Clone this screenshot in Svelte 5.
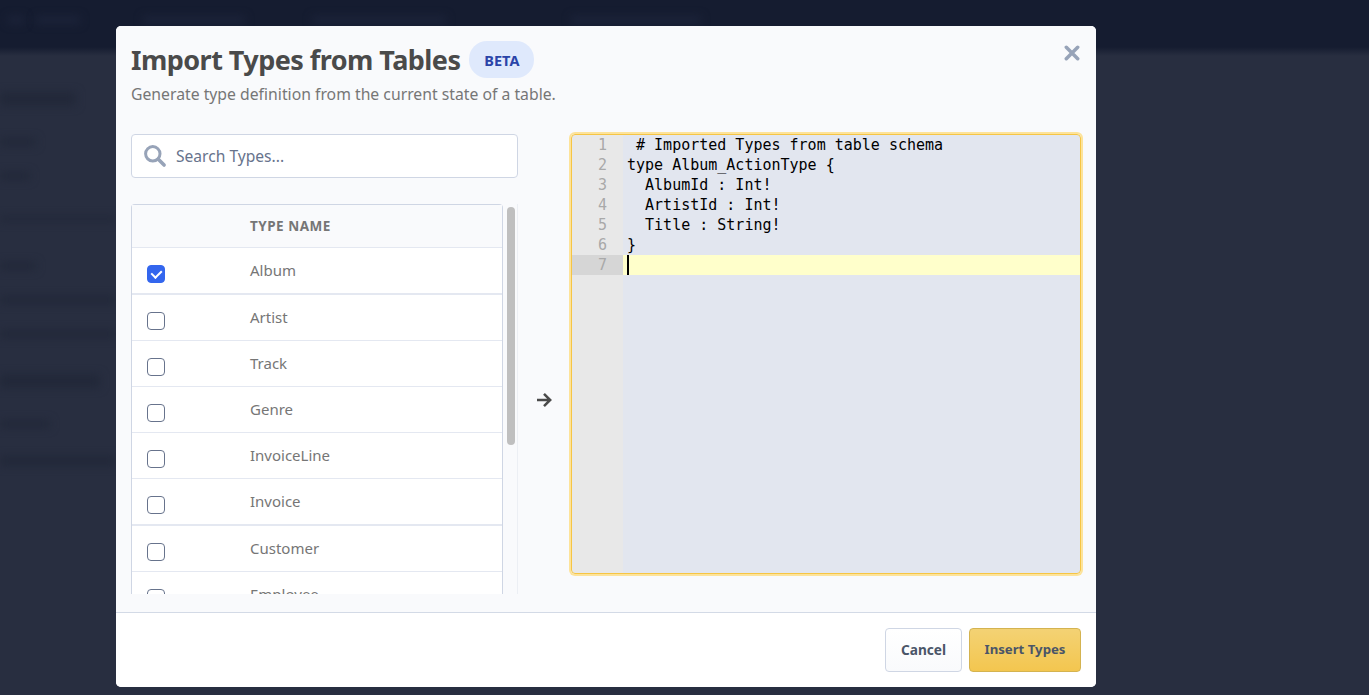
<script>
  let search = $state('');
  let rows = $state([
    { name: 'Album', checked: true, thick: true },
    { name: 'Artist', checked: false },
    { name: 'Track', checked: false },
    { name: 'Genre', checked: false },
    { name: 'InvoiceLine', checked: false },
    { name: 'Invoice', checked: false, thick: true },
    { name: 'Customer', checked: false },
    { name: 'Employee', checked: false }
  ]);

  const code = [
    ' # Imported Types from table schema',
    'type Album_ActionType {',
    '  AlbumId : Int!',
    '  ArtistId : Int!',
    '  Title : String!',
    '}',
    ''
  ];

  // what can still be made out of the page behind the modal
  const navBlurs = [
    { x: 8, w: 16 },
    { x: 12, w: 44 },
    { x: 63, w: 102 },
    { x: 67, w: 134 },
    { x: 125, w: 130 }
  ];
  const pageBlurs = [
    { gap: 92, w: 76, h: 14 },
    { gap: 32, w: 36, h: 8 },
    { gap: 26, w: 30, h: 8 },
    { gap: 36, w: 116, h: 6 },
    { gap: 40, w: 36, h: 8 },
    { gap: 26, w: 116, h: 8 },
    { gap: 26, w: 116, h: 8 },
    { gap: 36, w: 100, h: 14 },
    { gap: 32, w: 50, h: 8 },
    { gap: 28, w: 116, h: 10 }
  ];
</script>

<div class="page">
  <!-- blurred page behind the modal -->
  <div class="backdrop">
    <div class="nav">
      {#each navBlurs as b}
        <div class="nav-blur" style="margin-left: {b.x}px; width: {b.w}px"></div>
      {/each}
    </div>
    <div class="smudges">
      {#each pageBlurs as b}
        <div class="smudge" style="margin-top: {b.gap}px; width: {b.w}px; height: {b.h}px"></div>
      {/each}
    </div>
  </div>

  <div class="modal">
    <div class="body">
      <header>
        <div class="title-row">
          <h1>Import Types from Tables</h1>
          <span class="beta">BETA</span>
        </div>
        <p>Generate type definition from the current state of a table.</p>
        <button class="close" aria-label="Close">
          <svg viewBox="0 0 16 16" width="16" height="16">
            <path d="M2.300 2.300l11.400 11.400M13.700 2.300l-11.400 11.400" stroke="#97a3b8" stroke-width="3.500" stroke-linecap="round" fill="none" />
          </svg>
        </button>
      </header>

      <div class="columns">
        <div class="left">
          <label class="search">
            <svg viewBox="0 0 24 24" width="24" height="24">
              <circle cx="9.800" cy="9.800" r="7.200" fill="none" stroke="#97a3b8" stroke-width="3" />
              <path d="M15.300 15.300l5.800 5.800" stroke="#97a3b8" stroke-width="3.600" stroke-linecap="round" />
            </svg>
            <input placeholder="Search Types..." bind:value={search} />
          </label>

          <div class="table-wrap">
            <div class="table">
              <div class="row head">
                <div class="check-cell"></div>
                <div class="name">TYPE NAME</div>
              </div>
              {#each rows as row}
                <div class="row" class:thick={row.thick}>
                  <div class="check-cell">
                    <input type="checkbox" bind:checked={row.checked} />
                  </div>
                  <div class="name">{row.name}</div>
                </div>
              {/each}
            </div>
            <div class="scroll"><div class="thumb"></div></div>
          </div>
        </div>

        <div class="arrow">
          <svg viewBox="0 0 16 16" width="16" height="16">
            <path d="M1 8h13M8 1.800L14.200 8 8 14.200" fill="none" stroke="#4a4a4a" stroke-width="2.500" />
          </svg>
        </div>

        <div class="editor">
          {#each code as line, i}
            <div class="line" class:active={i === 6}>
              <span class="num">{i + 1}</span>
              <span class="text">{line}{#if i === 6}<i class="cursor"></i>{/if}</span>
            </div>
          {/each}
        </div>
      </div>
    </div>

    <footer>
      <button class="btn">Cancel</button>
      <button class="btn primary">Insert Types</button>
    </footer>
  </div>
</div>

<style>
  :global(body) {
    margin: 0;
    background: #282e40;
    font-family: 'Noto Sans', 'Open Sans', sans-serif;
  }

  .page {
    height: 695px;
    overflow: hidden;
    position: relative;
    background: #282e40;
  }

  .backdrop {
    position: absolute;
    inset: 0;
  }

  .nav {
    height: 56px;
    display: flex;
    padding-top: 16px;
    box-sizing: border-box;
    background: linear-gradient(#151c30 0, #151c30 47px, #282e40 56px);
  }

  .nav-blur {
    height: 8px;
    flex: none;
    background: #1c2339;
    filter: blur(4px);
  }

  .smudges {
    display: flex;
    flex-direction: column;
    margin-top: -56px;
  }

  .smudge {
    background: #222839;
    filter: blur(4px);
  }

  .modal {
    position: absolute;
    left: 116px;
    top: 26px;
    width: 980px;
    height: 661px;
    border-radius: 5px;
    overflow: hidden;
    background: #fff;
    display: flex;
    flex-direction: column;
  }

  .body {
    height: 586px;
    background: #f9fafc;
    border-bottom: 1px solid #d3dae6;
    box-sizing: content-box;
    padding: 0 15px;
    overflow: hidden;
    flex: none;
  }

  header {
    position: relative;
    padding-top: 15px;
  }

  .title-row {
    display: flex;
    align-items: center;
    gap: 9px;
  }

  h1 {
    margin: 0;
    font-size: 27px;
    line-height: 37px;
    font-weight: 700;
    color: #4a4a4a;
    letter-spacing: -0.54px;
  }

  .beta {
    height: 37px;
    width: 65px;
    border-radius: 18px;
    background: #dfe9fc;
    color: #2a44a8;
    font-size: 14.5px;
    font-weight: 700;
    display: flex;
    align-items: center;
    justify-content: center;
  }

  header p {
    margin: 6px 0 0;
    font-size: 15.75px;
    line-height: 20px;
    color: #767676;
  }

  .close {
    position: absolute;
    right: 1px;
    top: 19px;
    padding: 0;
    border: 0;
    background: none;
    cursor: pointer;
  }

  .columns {
    display: flex;
    margin-top: 29px;
    height: 470px;
    align-items: flex-start;
  }

  .left {
    width: 387px;
    flex: none;
    padding-top: 1px;
  }

  .search {
    height: 44px;
    box-sizing: border-box;
    background: #fff;
    border: 1px solid #cfd6e4;
    border-radius: 4px;
    display: flex;
    align-items: center;
    gap: 9px;
    padding-left: 11px;
  }

  .search input {
    border: 0;
    outline: 0;
    flex: 1;
    background: none;
    padding: 0;
    font: inherit;
    font-size: 15.6px;
    color: #4a5568;
  }

  .search input::placeholder {
    color: #67738c;
    opacity: 1;
  }

  .table-wrap {
    margin-top: 26px;
    display: flex;
    height: 390px;
    overflow: hidden;
  }

  .table {
    width: 372px;
    flex: none;
    box-sizing: border-box;
    background: #fff;
    border: 1px solid #cfd6e4;
    border-bottom: 0;
    border-radius: 4px 4px 0 0;
  }

  .row {
    display: flex;
    height: 46px;
    box-sizing: border-box;
    border-bottom: 1px solid #e4e8f1;
  }

  .row.thick {
    height: 47px;
    border-bottom-width: 2px;
  }

  .row.head {
    height: 43px;
    background: #f9fafc;
    align-items: center;
  }

  .check-cell {
    width: 118px;
    flex: none;
    display: flex;
    align-items: center;
    padding: 6px 0 0 15px;
    box-sizing: border-box;
  }

  .check-cell input {
    appearance: none;
    margin: 0;
    width: 18px;
    height: 18px;
    box-sizing: border-box;
    background: #fff;
    border: 1px solid #67738c;
    border-radius: 4px;
    position: relative;
  }

  .check-cell input:checked {
    background: #3366ee;
    border-color: #3366ee;
  }

  .check-cell input:checked::after {
    content: '';
    position: absolute;
    left: 5px;
    top: 2px;
    width: 5px;
    height: 8px;
    border: solid #fff;
    border-width: 0 2.5px 2.5px 0;
    transform: rotate(45deg);
  }

  .name {
    font-size: 15px;
    line-height: 44px;
    color: #767676;
  }

  .head .name {
    font-size: 13.5px;
    line-height: 40px;
    font-weight: 700;
    letter-spacing: 0.5px;
  }

  .scroll {
    width: 15px;
    flex: none;
    box-sizing: border-box;
    border-right: 1px solid #eceff4;
    padding: 3px 2px 0 4px;
  }

  .thumb {
    height: 238px;
    border-radius: 4px;
    background: #bfbfbf;
  }

  .arrow {
    width: 53px;
    flex: none;
    height: 442px;
    display: flex;
    align-items: center;
    justify-content: center;
    box-sizing: border-box;
    padding: 92px 1px 0 0;
  }

  .editor {
    width: 511px;
    height: 440px;
    box-sizing: border-box;
    margin-top: 1px;
    border: 1px solid #f6c544;
    border-radius: 4px;
    box-shadow: 0 0 0 2px #fde39a;
    background: linear-gradient(to right, #e8e8e8 51px, #e2e6ef 51px);
    overflow: hidden;
  }

  .line {
    display: flex;
    height: 20px;
    font-family: 'DejaVu Sans Mono', 'Liberation Mono', monospace;
    font-size: 15px;
    line-height: 20px;
    color: #000;
  }

  .num {
    width: 51px;
    flex: none;
    box-sizing: border-box;
    padding-right: 16px;
    text-align: right;
    color: #a9a9a9;
  }

  .text {
    padding-left: 4px;
    white-space: pre;
    flex: 1;
    position: relative;
  }

  .line.active {
    background: #ffffcb;
  }

  .line.active .num {
    background: #d6d6d6;
  }

  .cursor {
    position: absolute;
    left: 4px;
    top: 0;
    width: 2px;
    height: 20px;
    background: #000;
  }

  footer {
    flex: 1;
    background: #fff;
    display: flex;
    justify-content: flex-end;
    align-items: flex-start;
    gap: 7px;
    padding: 15px 15px 0 0;
  }

  .btn {
    height: 44px;
    width: 77px;
    border: 1px solid #cfd6e4;
    border-radius: 4px;
    background: linear-gradient(#fff, #f9fafc);
    color: #4a5568;
    font: inherit;
    font-size: 13.7px;
    font-weight: 700;
    padding: 0 0 2px;
    cursor: pointer;
  }

  .btn.primary {
    width: 112px;
    border-color: #d4b350;
    background: linear-gradient(#f3d274, #f3c64f);
    font-size: 13.2px;
  }
</style>
